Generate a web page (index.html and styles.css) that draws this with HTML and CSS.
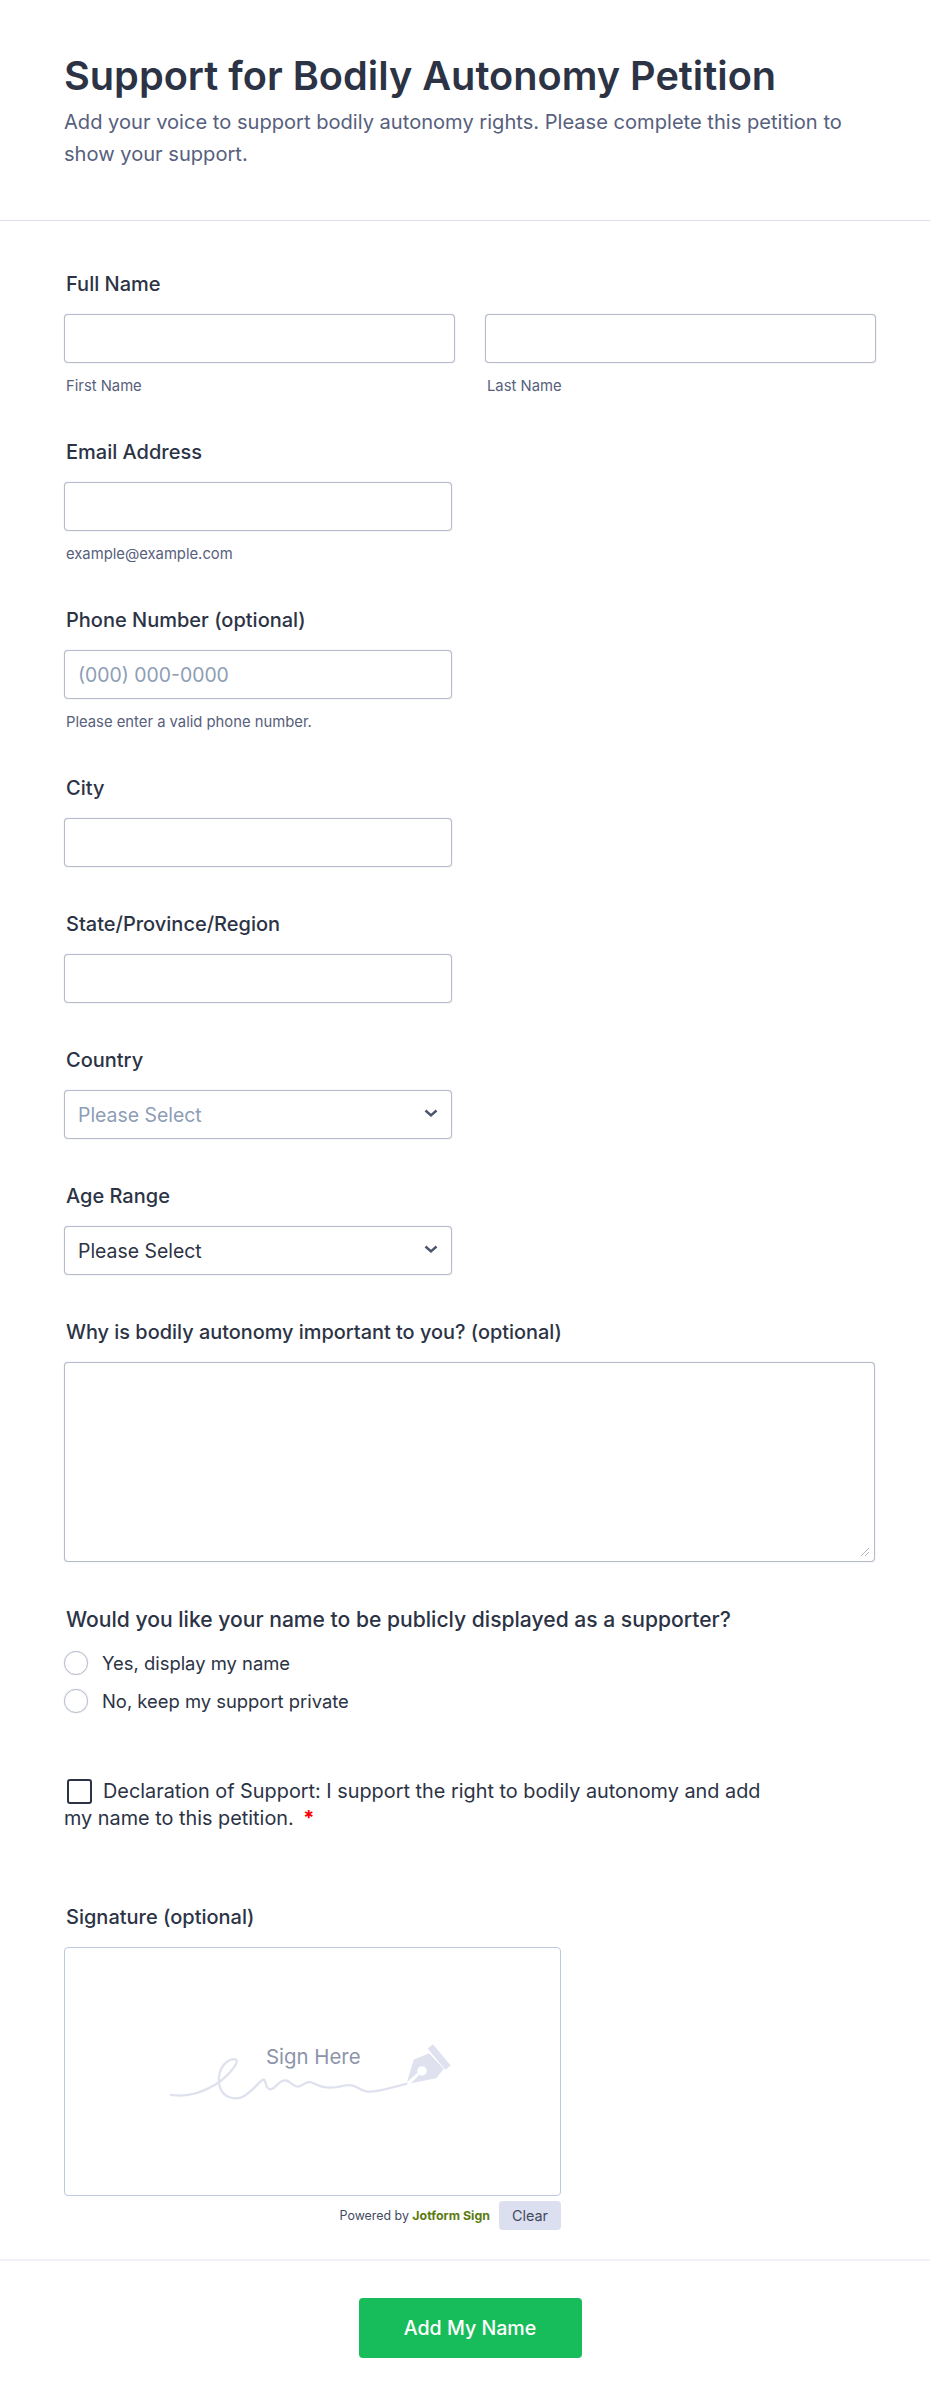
FILE: index.html
```html
<!DOCTYPE html>
<html lang="en">
<head>
<meta charset="utf-8">
<title>Support for Bodily Autonomy Petition</title>
<link rel="stylesheet" href="styles.css">
</head>
<body>
<form class="form">
  <header class="head">
    <h1 class="title">Support for Bodily Autonomy Petition</h1>
    <p class="subtitle">Add your voice to support bodily autonomy rights. Please complete this petition to show your support.</p>
  </header>
  <div class="fields">
    <div class="field field-sub">
      <div class="label">Full Name</div>
      <div class="name-row">
        <div class="name-col"><div class="box"></div><div class="hint">First Name</div></div>
        <div class="name-col"><div class="box"></div><div class="hint">Last Name</div></div>
      </div>
    </div>
    <div class="field field-sub">
      <div class="label">Email Address</div>
      <div class="box box-half"></div>
      <div class="hint">example@example.com</div>
    </div>
    <div class="field field-sub">
      <div class="label">Phone Number (optional)</div>
      <div class="box box-half box-text placeholder">(000) 000-0000</div>
      <div class="hint">Please enter a valid phone number.</div>
    </div>
    <div class="field">
      <div class="label">City</div>
      <div class="box box-half"></div>
    </div>
    <div class="field">
      <div class="label">State/Province/Region</div>
      <div class="box box-half"></div>
    </div>
    <div class="field">
      <div class="label">Country</div>
      <div class="box box-half box-text box-select placeholder">Please Select
        <svg class="chev" viewBox="0 0 14 9"><path d="M1.500 1.500 7 6.500l5.500-5" fill="none" stroke="#4c536f" stroke-width="2.400"/></svg>
      </div>
    </div>
    <div class="field">
      <div class="label">Age Range</div>
      <div class="box box-half box-text box-select">Please Select
        <svg class="chev" viewBox="0 0 14 9"><path d="M1.500 1.500 7 6.500l5.500-5" fill="none" stroke="#4c536f" stroke-width="2.400"/></svg>
      </div>
    </div>
    <div class="field">
      <div class="label label-why">Why is bodily autonomy important to you? (optional)</div>
      <div class="box box-area">
        <svg class="grip" viewBox="0 0 10 10"><path d="M1 9 9 1M5 9l4-4" stroke="#b4b8c6" stroke-width="1" fill="none"/></svg>
      </div>
    </div>
    <div class="field-radio">
      <div class="label label-wide">Would you like your name to be publicly displayed as a supporter?</div>
      <div class="radio"><span class="circle"></span>Yes, display my name</div>
      <div class="radio"><span class="circle"></span>No, keep my support private</div>
    </div>
    <div class="declare">
      <span class="check"></span>Declaration of Support: I support the right to bodily autonomy and add my name to this petition. <span class="req">*</span>
    </div>
    <div class="field-sign">
      <div class="label">Signature (optional)</div>
      <div class="sign-pad">
        <svg class="sign-art" viewBox="90 130 845 170">
          <path d="M93 285C130 291 175 285 225 255 255 236 285 205 290 186 292 176 275 174 258 188 238 205 230 240 242 268 252 290 278 300 302 293 330 284 352 250 368 240 380 236 372 262 388 268 405 272 415 238 438 242 452 245 458 262 475 260 492 256 500 240 520 250 538 260 560 266 590 262 610 258 630 250 650 262 670 275 685 278 710 273 740 267 770 259 798 252" fill="none" stroke="#dfe2ee" stroke-width="7" stroke-linecap="round"/>
          <path fill-rule="evenodd" d="M800 247 820 180 866 160 910 207 888 235 812 250 838 224 832 219ZM845 199a14 14 0 1 0 .1 0Z" fill="#dfe2ee"/>
          <path d="M862 146 878 133 931 197 915 210Z" fill="#dfe2ee"/>
        </svg>
        <span class="sign-text">Sign Here</span>
      </div>
      <div class="sign-foot">
        <span class="powered">Powered by <b class="brand">Jotform Sign</b></span>
        <span class="clear">Clear</span>
      </div>
    </div>
  </div>
  <footer class="foot">
    <button type="button" class="submit">Add My Name</button>
  </footer>
</form>
</body>
</html>
```
FILE: styles.css
```css
* { box-sizing: border-box; }
html, body { margin: 0; padding: 0; background: #fff; }
body { font-family: Inter, "Liberation Sans", sans-serif; color: #2c3345; }
.form { width: 930px; height: 2407px; display: flex; flex-direction: column; }
.head { height: 221px; padding: 51px 64px 0; border-bottom: 1px solid #dfe1ea; }
.title { margin: 0 0 5px; font-size: 39.7px; line-height: 50px; font-weight: 600; color: #2c3345; }
.subtitle { margin: 0; width: 800px; font-size: 20.1px; line-height: 32px; color: #57607c; }
.fields { padding: 48px 55px 0 64px; flex: 1; }
.field { margin-bottom: 42px; }
.field-sub { margin-bottom: 39px; }
.label { margin: 0 0 15px 2px; font-size: 20px; line-height: 30px; font-weight: 450; color: #2c3345; }
.label-why { font-size: 19.9px; }
.label-wide { font-size: 21.1px; }
.name-row { display: flex; gap: 30px; }
.name-col { flex: 0 0 391px; }
.box { height: 49px; border: 1px solid #b6bbca; border-radius: 4px; background: #fff; box-shadow: 0 0 1px #b6bbca; }
.box-half { width: 388px; }
.box-text { padding: 0 13px; display: flex; align-items: center; justify-content: space-between; font-size: 19.4px; color: #2c3345; }
.placeholder { color: #8d9db5; }
.chev { width: 14px; height: 9px; margin-bottom: 2px; }
.hint { margin: 11px 0 0 2px; font-size: 14.8px; line-height: 24px; color: #57607c; }
.box-area { position: relative; height: 200px; width: 811px; }
.grip { position: absolute; right: 4px; bottom: 4px; width: 10px; height: 10px; }
.field-radio { margin: 43px 0 58px; }
.field-radio .label { margin-bottom: 9px; }
.radio { display: flex; align-items: center; gap: 14px; height: 38px; font-size: 18.4px; color: #2c3345; }
.circle { width: 24px; height: 24px; border: 1px solid #b6bbca; border-radius: 50%; box-shadow: 0 0 1px #b6bbca; }
.declare { width: 720px; font-size: 19.85px; line-height: 27px; color: #2c3345; margin-bottom: 70px; }
.check { display: inline-block; width: 25px; height: 25px; border: 2px solid #2c3345; border-radius: 3px; margin: 0 11px 0 3px; vertical-align: -6px; }
.req { color: #f00; font-weight: 700; margin-left: 4px; }
.sign-pad { position: relative; width: 497px; height: 249px; border: 1px solid #bcc9e2; border-radius: 4px; }
.sign-text { position: absolute; left: 201px; top: 94px; font-size: 20.4px; line-height: 30px; color: #8d94aa; }
.sign-art { position: absolute; left: 105px; top: 95px; width: 282px; height: 57px; }
.sign-foot { width: 497px; display: flex; justify-content: flex-end; align-items: center; gap: 9px; margin-top: 5px; }
.powered { font-size: 12.4px; color: #434a60; }
.brand { color: #5c7c10; font-weight: 700; }
.clear { width: 62px; height: 29px; border-radius: 4px; background: #dbdfef; font-size: 14.4px; line-height: 29px; text-align: center; color: #434a60; }
.foot { height: 148px; border-top: 2px solid #f1f2f7; padding: 37px 0 0 10px; display: flex; justify-content: center; align-items: flex-start; }
.submit { width: 223px; height: 60px; border: 0; border-radius: 4px; background: #18bd5b; color: #fff; font: 500 19.6px Inter, sans-serif; }
```
